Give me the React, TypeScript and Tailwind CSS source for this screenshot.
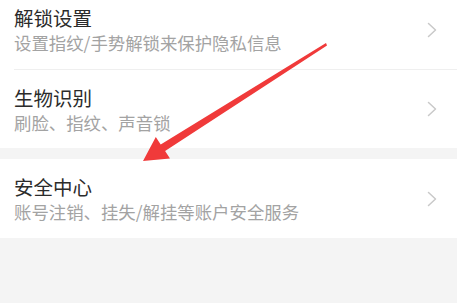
import React from "react";

const font = { fontFamily: '"Noto Sans CJK SC", "Noto Sans", sans-serif' };

function Chevron() {
  return (
    <svg width="10" height="16" viewBox="0 0 10 16" fill="none" className="shrink-0">
      <path d="M1.5 1.5 L8.5 8 L1.5 14.5" stroke="#c9c9c9" strokeWidth="1.5" strokeLinecap="round" strokeLinejoin="round" />
    </svg>
  );
}

function Row({ title, sub, className = "" }: { title: string; sub: string; className?: string }) {
  return (
    <div className={`flex items-center pl-[14px] pr-[20px] bg-white ${className}`}>
      <div className="flex-1 flex flex-col">
        <div className="text-[19.5px] leading-[26px] text-[#2b2b2b]">{title}</div>
        <div className="text-[17.4px] leading-[23px] text-[#a3a3a3]">{sub}</div>
      </div>
      <Chevron />
    </div>
  );
}

export default function App() {
  return (
    <div className="relative w-[457px] h-[303px] bg-[#f4f4f4] overflow-hidden" style={font}>
      <div className="bg-white -mt-[10px]">
        <Row title="解锁设置" sub="设置指纹/手势解锁来保护隐私信息" className="h-[79px]" />
        <div className="ml-[14px] h-px bg-[#efefef]" />
        <Row title="生物识别" sub="刷脸、指纹、声音锁" className="h-[78px]" />
      </div>
      <div className="h-[11px]" />
      <Row title="安全中心" sub="账号注销、挂失/解挂等账户安全服务" className="h-[79px]" />
      <svg className="absolute left-0 top-0 pointer-events-none" width="457" height="303" viewBox="0 0 457 303">
        <polygon
          points="143,161 155.8,137 160.7,144.5 326,43 327,45.5 165.1,151.1 170,158.6"
          fill="#f03a3a"
        />
      </svg>
    </div>
  );
}
